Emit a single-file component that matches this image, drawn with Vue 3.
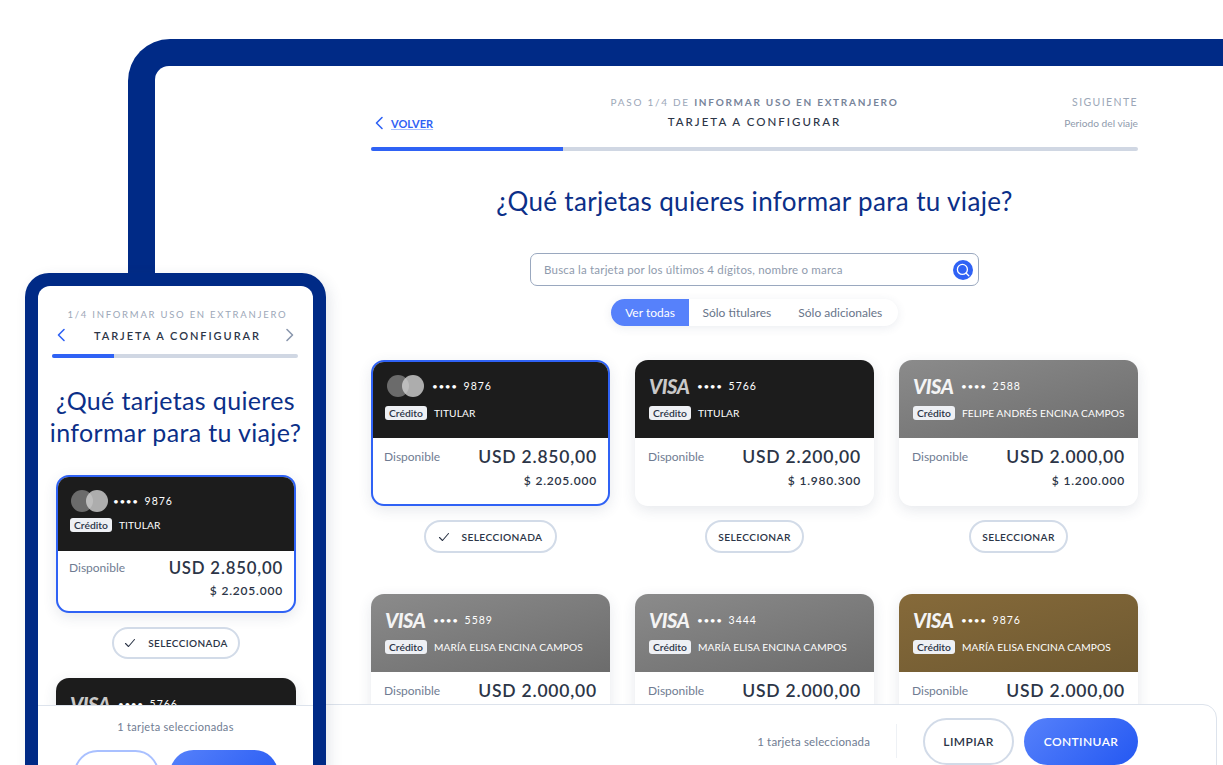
<script setup>
const cards = [
  { brand: 'mc', num: '9876', holder: 'TITULAR', usd: '2.850,00', clp: '2.205.000', tone: 'dark', selected: true },
  { brand: 'visa', num: '5766', holder: 'TITULAR', usd: '2.200,00', clp: '1.980.300', tone: 'dark' },
  { brand: 'visa', num: '2588', holder: 'FELIPE ANDRÉS ENCINA CAMPOS', usd: '2.000,00', clp: '1.200.000', tone: 'grey' },
  { brand: 'visa', num: '5589', holder: 'MARÍA ELISA ENCINA CAMPOS', usd: '2.000,00', clp: '1.200.000', tone: 'grey' },
  { brand: 'visa', num: '3444', holder: 'MARÍA ELISA ENCINA CAMPOS', usd: '2.000,00', clp: '1.200.000', tone: 'grey' },
  { brand: 'visa', num: '9876', holder: 'MARÍA ELISA ENCINA CAMPOS', usd: '2.000,00', clp: '1.200.000', tone: 'gold' },
]
const phoneCards = cards.slice(0, 2)
</script>

<template>
  <div class="canvas">
    <section class="frame">
      <div class="screen">
        <header class="steps">
          <a class="back">
            <svg width="10" height="14" viewBox="0 0 10 14"><path d="M8 1.5 2.5 7 8 12.5" fill="none" stroke="#2f62f5" stroke-width="1.6" stroke-linecap="round" stroke-linejoin="round" /></svg>
            <span>VOLVER</span>
          </a>
          <div class="steps-mid">
            <p class="eyebrow">PASO 1/4 DE <b>INFORMAR USO EN EXTRANJERO</b></p>
            <p class="step-title">TARJETA A CONFIGURAR</p>
          </div>
          <div class="steps-next">
            <p class="next-label">SIGUIENTE</p>
            <p class="next-name">Periodo del viaje</p>
          </div>
        </header>
        <div class="progress"><i></i></div>

        <h1 class="title">¿Qué tarjetas quieres informar para tu viaje?</h1>

        <div class="search">
          <span>Busca la tarjeta por los últimos 4 dígitos, nombre o marca</span>
          <span class="search-btn">
            <svg width="14" height="14" viewBox="0 0 14 14"><circle cx="6.4" cy="6.4" r="5" fill="none" stroke="#fff" stroke-width="1.3" /><path d="m10.2 10.2 2.6 2.6" stroke="#fff" stroke-width="1.3" stroke-linecap="round" /></svg>
          </span>
        </div>

        <div class="tabs">
          <span class="tab on">Ver todas</span>
          <span class="tab">Sólo titulares</span>
          <span class="tab">Sólo adicionales</span>
        </div>

        <div class="grid">
          <div v-for="(c, i) in cards" :key="i" class="cell">
            <article class="card" :class="{ selected: c.selected }">
              <div class="card-top" :class="c.tone">
                <div class="card-line">
                  <span v-if="c.brand === 'mc'" class="mc"><i></i><i></i></span>
                  <span v-else class="visa">VISA</span>
                  <span class="dots">••••</span>
                  <span class="num">{{ c.num }}</span>
                </div>
                <div class="card-line second">
                  <span class="chip">Crédito</span>
                  <span class="holder">{{ c.holder }}</span>
                </div>
              </div>
              <div class="card-body">
                <span class="avail">Disponible</span>
                <div class="amounts">
                  <strong>USD {{ c.usd }}</strong>
                  <em>$ {{ c.clp }}</em>
                </div>
              </div>
            </article>
            <button class="pick" :class="{ picked: c.selected }">
              <svg v-if="c.selected" width="12" height="10" viewBox="0 0 12 10"><path d="m1.5 5.5 3 3 6-7" fill="none" stroke="#2c3547" stroke-width="1.1" stroke-linecap="round" stroke-linejoin="round" /></svg>
              {{ c.selected ? 'SELECCIONADA' : 'SELECCIONAR' }}
            </button>
          </div>
        </div>

        <footer class="bar">
          <span class="bar-count">1 tarjeta seleccionada</span>
          <span class="bar-sep"></span>
          <button class="btn ghost">LIMPIAR</button>
          <button class="btn solid">CONTINUAR</button>
        </footer>
      </div>
    </section>

    <section class="phone">
      <div class="phone-screen">
        <p class="phone-eyebrow">1/4 INFORMAR USO EN EXTRANJERO</p>
        <div class="phone-head">
          <svg width="10" height="14" viewBox="0 0 10 14"><path d="M8 1.5 2.5 7 8 12.5" fill="none" stroke="#2f62f5" stroke-width="1.6" stroke-linecap="round" stroke-linejoin="round" /></svg>
          <span>TARJETA A CONFIGURAR</span>
          <svg width="10" height="14" viewBox="0 0 10 14"><path d="M2 1.5 7.5 7 2 12.5" fill="none" stroke="#8a97ad" stroke-width="1.6" stroke-linecap="round" stroke-linejoin="round" /></svg>
        </div>
        <div class="progress phone-progress"><i></i></div>
        <h2 class="phone-title">¿Qué tarjetas quieres informar para tu viaje?</h2>

        <div v-for="(c, i) in phoneCards" :key="i" class="cell phone-cell">
          <article class="card" :class="{ selected: c.selected }">
            <div class="card-top" :class="c.tone">
              <div class="card-line">
                <span v-if="c.brand === 'mc'" class="mc"><i></i><i></i></span>
                <span v-else class="visa">VISA</span>
                <span class="dots">••••</span>
                <span class="num">{{ c.num }}</span>
              </div>
              <div class="card-line second">
                <span class="chip">Crédito</span>
                <span class="holder">{{ c.holder }}</span>
              </div>
            </div>
            <div class="card-body">
              <span class="avail">Disponible</span>
              <div class="amounts">
                <strong>USD {{ c.usd }}</strong>
                <em>$ {{ c.clp }}</em>
              </div>
            </div>
          </article>
          <button v-if="c.selected" class="pick picked">
            <svg width="12" height="10" viewBox="0 0 12 10"><path d="m1.5 5.5 3 3 6-7" fill="none" stroke="#2c3547" stroke-width="1.1" stroke-linecap="round" stroke-linejoin="round" /></svg>
            SELECCIONADA
          </button>
        </div>

        <footer class="phone-bar">
          <p>1 tarjeta seleccionadas</p>
          <div class="phone-btns">
            <button class="btn ghost light"></button>
            <button class="btn solid wide"></button>
          </div>
        </footer>
      </div>
    </section>
  </div>
</template>

<style>
html, body {
  margin: 0;
  overflow: hidden;
  background: #fff;
}
</style>

<style scoped>
.canvas {
  position: relative;
  width: 1223px;
  height: 765px;
  overflow: hidden;
  background: #fff;
  font-family: "Lato", "Noto Sans", sans-serif;
  color: #2c3547;
}
p, h1, h2 { margin: 0; font-weight: 400; }

.frame {
  position: absolute;
  left: 128px;
  top: 39px;
  width: 1250px;
  height: 900px;
  background: #002a86;
  border-radius: 42px 0 0 0;
  padding: 27px 0 0 27px;
  box-sizing: border-box;
}
.screen {
  position: relative;
  height: 100%;
  background: #fff;
  border-radius: 14px 0 0 0;
  padding: 28px 0 0 216px;
  box-sizing: border-box;
}

.steps {
  width: 767px;
  display: grid;
  grid-template-columns: 1fr auto 1fr;
  align-items: end;
  height: 44px;
}
.back {
  display: flex;
  align-items: center;
  gap: 7px;
  padding-left: 3px;
  color: #2f62f5;
  font-size: 11px;
  font-weight: 700;
  margin-bottom: 8px;
}
.back span { text-decoration: underline; text-decoration-color: #a9c0ff; }
.eyebrow {
  font-size: 10px;
  letter-spacing: 1.73px;
  color: #9ca7b8;
  text-align: center;
  margin-bottom: 7px;
}
.eyebrow b { color: #77849a; font-weight: 700; }
.step-title {
  font-size: 11.5px;
  letter-spacing: 2px;
  color: #2c3547;
  text-align: center;
  font-weight: 500;
  margin-bottom: 10px;
}
.steps-next { text-align: right; }
.next-label {
  font-size: 10.5px;
  letter-spacing: 1.4px;
  color: #9ca7b8;
  margin-bottom: 9px;
}
.next-name { font-size: 10.2px; color: #8f9bad; margin-bottom: 9px; }

.progress {
  width: 767px;
  height: 4px;
  margin-top: 9px;
  border-radius: 2px;
  background: #d0d7e3;
  overflow: hidden;
}
.progress i {
  display: block;
  width: 25%;
  height: 100%;
  background: #2f62f5;
}

.title {
  width: 767px;
  margin-top: 33px;
  text-align: center;
  font-size: 26px;
  line-height: 34px;
  letter-spacing: 0.35px;
  color: #0b2f88;
}

.search {
  width: 449px;
  height: 33px;
  margin: 35px 0 0 159px;
  padding: 0 5px 0 13px;
  box-sizing: border-box;
  display: flex;
  align-items: center;
  justify-content: space-between;
  border: 1px solid #9aa8bf;
  border-radius: 7px;
  font-size: 11.5px;
  letter-spacing: 0.2px;
  color: #8f9bad;
}
.search-btn {
  width: 20px;
  height: 20px;
  border-radius: 50%;
  background: #2f62f5;
  display: flex;
  align-items: center;
  justify-content: center;
}

.tabs {
  width: 287px;
  height: 27px;
  margin: 13px 0 0 240px;
  display: flex;
  border-radius: 14px;
  background: #fff;
  box-shadow: 0 2px 10px rgba(60, 80, 120, 0.1);
  font-size: 12px;
  color: #68758a;
}
.tab {
  display: flex;
  align-items: center;
  padding: 0 13.5px;
}
.tab.on {
  width: 78px;
  padding: 0;
  justify-content: center;
  background: #5681fb;
  color: #fff;
  border-radius: 14px 0 0 14px;
}

.grid {
  width: 767px;
  margin-top: 34px;
  display: grid;
  grid-template-columns: repeat(3, 239px);
  column-gap: 25px;
  row-gap: 41px;
}
.cell {
  display: flex;
  flex-direction: column;
  align-items: center;
  gap: 14px;
}
.card {
  width: 100%;
  height: 146px;
  border-radius: 13px;
  background: #fff;
  overflow: hidden;
  box-shadow: 0 4px 14px rgba(50, 65, 95, 0.12);
  box-sizing: border-box;
}
.card.selected {
  border: 2px solid #2f62f5;
}
.card-top {
  height: 78px;
  padding: 15px 14px 0 14px;
  box-sizing: border-box;
  color: #fff;
}
.selected .card-top { height: 76px; padding: 13px 12px 0; }
.card-top.dark { background: #1c1c1c; }
.card-top.grey { background: linear-gradient(165deg, #8b8b8b, #6c6c6c); }
.card-top.gold { background: linear-gradient(165deg, #866a3a, #6e5931); }

.card-line {
  display: flex;
  align-items: center;
  height: 22px;
  gap: 6px;
}
.card-line.second { margin-top: 8px; height: 16px; gap: 7px; }
.mc {
  position: relative;
  width: 37px;
  height: 22px;
  margin-right: 2px;
  margin-left: 2px;
}
.mc i {
  position: absolute;
  top: 0;
  width: 22px;
  height: 22px;
  border-radius: 50%;
}
.mc i:first-child { left: 0; background: #6b6b6b; }
.mc i:last-child { left: 15px; background: rgba(210, 210, 210, 0.8); }
.visa {
  font-family: "Lato", "Liberation Sans", sans-serif;
  font-size: 20px;
  font-weight: 900;
  font-style: italic;
  letter-spacing: -0.4px;
  color: #f4f4f4;
  width: 42px;
}
.dark .visa { color: #c9c9c9; }
.dots { font-size: 10px; letter-spacing: 0.6px; }
.num { font-size: 10.5px; letter-spacing: 0.95px; margin-left: 0; }
.chip {
  padding: 0 4px;
  height: 14px;
  line-height: 14px;
  border-radius: 3px;
  background: #eef0f4;
  color: #2c3547;
  font-size: 10.3px;
  font-weight: 600;
}
.holder { font-size: 10.2px; letter-spacing: 0.1px; white-space: nowrap; }
.card-body {
  padding: 9px 13px 0;
  display: flex;
  justify-content: space-between;
}
.selected .card-body { padding: 9px 11px 0; }
.avail { font-size: 12px; color: #6f7c92; margin-top: 2px; }
.amounts {
  display: flex;
  flex-direction: column;
  align-items: flex-end;
}
.amounts strong {
  font-size: 17.5px;
  line-height: 20px;
  letter-spacing: 0.8px;
  font-weight: 600;
}
.amounts em {
  font-style: normal;
  font-size: 12px;
  line-height: 16px;
  letter-spacing: 0.8px;
  font-weight: 600;
  margin-top: 6px;
}

.pick {
  height: 33px;
  padding: 0 11px;
  box-sizing: border-box;
  display: flex;
  align-items: center;
  gap: 11px;
  border: 2px solid #d2dbe8;
  border-radius: 17px;
  background: #fff;
  font-family: inherit;
  font-size: 10.2px;
  font-weight: 600;
  letter-spacing: 0.4px;
  color: #2c3547;
}
.pick.picked { padding: 0 12px; }

.bar {
  position: absolute;
  left: 0;
  top: 638px;
  width: 1062px;
  height: 120px;
  box-sizing: border-box;
  padding: 13px 78px 0 0;
  display: flex;
  justify-content: flex-end;
  align-items: flex-start;
  background: #fff;
  border: 1px solid #dde3ec;
  border-radius: 0 14px 0 0;
}
.bar-count {
  font-size: 11.5px;
  color: #6f7c92;
  margin-top: 17px;
  letter-spacing: 0.15px;
}
.bar-sep {
  width: 1px;
  height: 34px;
  margin: 6px 26px 0;
  background: #eef1f5;
}
.btn {
  height: 47px;
  box-sizing: border-box;
  border-radius: 24px;
  font-family: inherit;
  font-size: 12px;
  font-weight: 600;
  letter-spacing: 0.4px;
}
.btn.ghost {
  width: 91px;
  margin-right: 10px;
  background: #fff;
  color: #2c3547;
  border: 2px solid #d2dbe8;
}
.btn.solid {
  width: 114px;
  border: 0;
  color: #fff;
  background: linear-gradient(135deg, #5681fb, #2458f2);
}

.phone {
  position: absolute;
  left: 25px;
  top: 273px;
  width: 301px;
  height: 560px;
  box-sizing: border-box;
  padding: 13px;
  background: #002a86;
  border-radius: 24px;
  box-shadow: 4px 4px 14px rgba(50, 65, 95, 0.12);
}
.phone-screen {
  position: relative;
  height: 100%;
  background: #fff;
  border-radius: 12px;
  overflow: hidden;
  box-sizing: border-box;
  padding: 23px 14px 0;
}
.phone-eyebrow {
  text-align: center;
  padding-left: 4px;
  font-size: 9.5px;
  letter-spacing: 1.75px;
  color: #9ca7b8;
}
.phone-head {
  display: flex;
  align-items: center;
  justify-content: space-between;
  margin-top: 5px;
  padding: 0 4px;
  height: 20px;
  font-size: 11px;
  font-weight: 600;
  letter-spacing: 1.95px;
}
.phone-head span { margin-left: 4px; }
.phone-progress {
  width: 246px;
  margin-top: 9px;
}
.phone-title {
  margin: 26px -10px 0;
  text-align: center;
  font-size: 25px;
  line-height: 32px;
  letter-spacing: 0.35px;
  color: #0b2f88;
}
.phone-cell {
  margin: 0 4px;
  width: 240px;
  gap: 14px;
}
.phone-title + .phone-cell { margin-top: 27px; margin-bottom: 19px; }
.phone-cell .card { height: 138px; }
.phone-cell .card-top { height: 74px; }
.phone-cell .card-line.second { margin-top: 5px; }
.phone-cell .card-body { padding-top: 7px; }
.phone-cell .amounts strong { font-size: 16.8px; }
.phone-cell .amounts em { margin-top: 5px; }
.phone-cell .mc { width: 35px; margin-right: 1px; margin-left: 1px; }
.phone-cell .pick { height: 32px; padding: 0 10px; gap: 12px; font-size: 10px; }
.phone-bar {
  position: absolute;
  left: 0;
  right: 0;
  top: 419px;
  height: 160px;
  background: #fff;
  border-top: 1px solid #dde3ec;
  text-align: center;
}
.phone-bar p {
  margin-top: 14px;
  font-size: 11px;
  letter-spacing: 0.3px;
  color: #6f7c92;
}
.phone-btns {
  display: flex;
  justify-content: flex-start;
  margin-top: 17px;
  padding-left: 36px;
}
.btn.light {
  width: 85px;
  margin-right: 11px;
  border-color: #a9c0ff;
}
.btn.wide { width: 108px; }
</style>
